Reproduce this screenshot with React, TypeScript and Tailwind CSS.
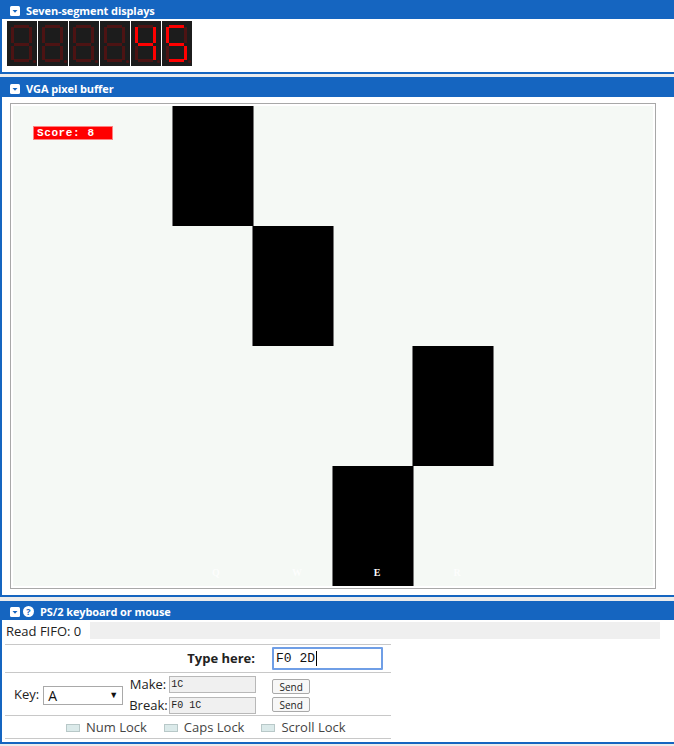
import React from 'react';

const BLUE = 'border-[#1565c0]';

// segments: a b c d e f g
const DIGITS: Record<string, string> = {
  '8': 'abcdefg',
  '4': 'bcfg',
  '5': 'acdfg',
  ' ': '',
};

const SEGS: Record<string, { x: number; y: number; w: number; h: number }> = {
  a: { x: 7, y: 4, w: 15, h: 3 },
  b: { x: 22, y: 6, w: 3, h: 16 },
  c: { x: 22, y: 25, w: 3, h: 14 },
  d: { x: 7, y: 38, w: 15, h: 3 },
  e: { x: 4, y: 25, w: 3, h: 14 },
  f: { x: 4, y: 6, w: 3, h: 16 },
  g: { x: 7, y: 22, w: 15, h: 3 },
};

function SevenSeg({ value }: { value: string }) {
  const on = DIGITS[value] ?? '';
  return (
    <svg width="30" height="45" viewBox="0 0 30 45" className="block">
      <rect x="0" y="0" width="30" height="45" fill="#1c1c1c" />
      {Object.entries(SEGS).map(([k, s]) => (
        <rect key={k} x={s.x} y={s.y} width={s.w} height={s.h} fill={on.includes(k) ? '#ff0000' : '#4c1313'} />
      ))}
      <circle cx="27.5" cy="40.5" r="1.6" fill="#4c1313" />
    </svg>
  );
}

function Collapse() {
  return (
    <svg width="10" height="10" viewBox="0 0 10 10" className="block">
      <rect x="0" y="0" width="10" height="10" rx="1.5" fill="#fff" />
      <path d="M2.5 4 L7.5 4 L5 6.8 Z" fill="#1565c0" />
    </svg>
  );
}

function Help() {
  return (
    <svg width="11" height="11" viewBox="0 0 11 11" className="block">
      <circle cx="5.5" cy="5.5" r="5.5" fill="#fff" />
      <text x="5.5" y="8.6" textAnchor="middle" fontSize="9" fontWeight="700" fill="#1565c0" fontFamily="'Open Sans', sans-serif">?</text>
    </svg>
  );
}

function Header({ title, help }: { title: string; help?: boolean }) {
  return (
    <div className="h-[19px] bg-[#1565c0] flex items-center pl-[8px] gap-[2px]">
      <div className="mt-[2px] flex items-center gap-[3px]">
        <Collapse />
        {help && <Help />}
      </div>
      <span className="ml-[4px] mt-[1px] text-white font-bold text-[11px] leading-none tracking-[-0.1px]">{title}</span>
    </div>
  );
}

const tiles = [
  { left: 160, top: -3, h: 123 },
  { left: 240, top: 120, h: 120 },
  { left: 400, top: 240, h: 120 },
  { left: 320, top: 360, h: 120 },
];

const keys = [
  { k: 'Q', x: 203, onTile: false },
  { k: 'W', x: 284, onTile: false },
  { k: 'E', x: 364, onTile: true },
  { k: 'R', x: 444, onTile: false },
];

export default function App() {
  return (
    <div className="w-[674px] h-[746px] overflow-hidden bg-[#ececec] font-['Open_Sans',sans-serif] text-[#222]">
      <div className="w-[700px] flex flex-col">
        {/* Seven segment */}
        <div className={`border-x-2 border-b-2 ${BLUE} bg-white`}>
          <Header title="Seven-segment displays" />
          <div className="h-[53px] pt-[2px] pl-[5px] flex gap-[1px]">
            {['8', '8', '8', '8', '4', '5'].map((d, i) => (
              <SevenSeg key={i} value={i < 4 ? ' ' : d} />
            ))}
          </div>
        </div>

        {/* VGA */}
        <div className={`mt-[3px] border-x-2 border-b-2 ${BLUE} bg-white`}>
          <div className="h-[1px] bg-[#1565c0]" />
          <Header title="VGA pixel buffer" />
          <div className="h-[498px] pt-[6px] pl-[8px]">
            <div className="w-[646px] h-[486px] border border-[#a8a8a8] p-[2px]">
              <div className="relative w-[640px] h-[480px] bg-[#f5f9f5] overflow-hidden">
                <div className="absolute left-[20px] top-[20px] w-[80px] h-[14px] bg-[#ff0000] border border-[#ff8080] flex items-center pl-[3px] font-['Liberation_Mono',monospace] font-bold text-[11px] text-white leading-none tracking-[0.6px]">
                  Score: 8
                </div>
                {tiles.map((t, i) => (
                  <div
                    key={i}
                    className="absolute bg-black border-x border-[#777]"
                    style={{ left: t.left - 1, top: t.top, width: 82, height: t.h }}
                  />
                ))}
                {keys.map((k) => (
                  <span
                    key={k.k}
                    className={`absolute top-[462px] w-[20px] -ml-[10px] text-center font-['Liberation_Serif',serif] font-bold text-[10px] leading-none ${k.onTile ? 'text-white' : 'text-[#ffffff] opacity-80'}`}
                    style={{ left: k.x }}
                  >
                    {k.k}
                  </span>
                ))}
              </div>
            </div>
          </div>
        </div>

        {/* PS/2 */}
        <div className={`mt-[4px] border-x-2 border-b-2 ${BLUE} bg-white`}>
          <Header title="PS/2 keyboard or mouse" help />
          <div className="h-[120px] text-[13px]">
            <div className="mt-[2px] h-[17px] flex items-center">
              <span className="pl-[4px] w-[88px] leading-none mt-[1px]">Read FIFO: 0</span>
              <div className="w-[570px] h-[17px] bg-[#efefef]" />
            </div>
            <div className="ml-[3px] mt-[5px] w-[386px] border-t border-[#c8c8c8]">
              <div className="h-[28px] flex items-center border-b border-[#c8c8c8]">
                <span className="w-[250px] text-right font-bold">Type here:</span>
                <div className="ml-[17px] w-[111px] h-[23px] border-2 border-[#6f9ee6] rounded-[1px] flex items-center pl-[2px] font-['Liberation_Mono',monospace] text-[13px] text-[#111]">
                  F0 2D<span className="inline-block w-[1px] h-[15px] bg-black ml-[1px]" />
                </div>
              </div>
              <div className="h-[43px] pt-[2px] flex items-center border-b border-[#c8c8c8]">
                <span className="ml-[9px]">Key:</span>
                <div className="ml-[4px] w-[80px] h-[19px] border border-[#a9a9a9] flex items-center justify-between px-[4px] text-[14px] text-[#111]">
                  <span>A</span>
                  <span className="text-[9px]">▼</span>
                </div>
                <div className="ml-[6px] flex flex-col gap-[2px]">
                  <div className="flex items-center">
                    <span className="w-[37px] text-right">Make:</span>
                    <div className="ml-[3px] w-[87px] h-[17px] bg-[#f0f0f0] border border-[#b8b8b8] flex items-center pl-[1px] font-['Liberation_Mono',monospace] text-[10px] text-[#222]">1C</div>
                  </div>
                  <div className="flex items-center">
                    <span className="w-[37px] text-right">Break:</span>
                    <div className="ml-[3px] w-[87px] h-[17px] bg-[#f0f0f0] border border-[#b8b8b8] flex items-center pl-[1px] font-['Liberation_Mono',monospace] text-[10px] text-[#222]">F0 1C</div>
                  </div>
                </div>
                <div className="ml-[16px] mt-[1px] flex flex-col gap-[3px]">
                  <button className="w-[38px] h-[15px] bg-[#f7f7f7] border border-[#a9a9a9] rounded-[2px] text-[10px] leading-none text-[#222]">Send</button>
                  <button className="w-[38px] h-[15px] bg-[#f7f7f7] border border-[#a9a9a9] rounded-[2px] text-[10px] leading-none text-[#222]">Send</button>
                </div>
              </div>
              <div className="h-[23px] pt-[1px] flex items-center pl-[61px] border-b border-[#c8c8c8] text-[#444]">
                {['Num Lock', 'Caps Lock', 'Scroll Lock'].map((l) => (
                  <div key={l} className="flex items-center mr-[17px]">
                    <div className="w-[14px] h-[8px] bg-[#dbeaea] border border-[#b8c8c8]" />
                    <span className="ml-[6px]">{l}</span>
                  </div>
                ))}
              </div>
            </div>
          </div>
        </div>
      </div>
    </div>
  );
}
